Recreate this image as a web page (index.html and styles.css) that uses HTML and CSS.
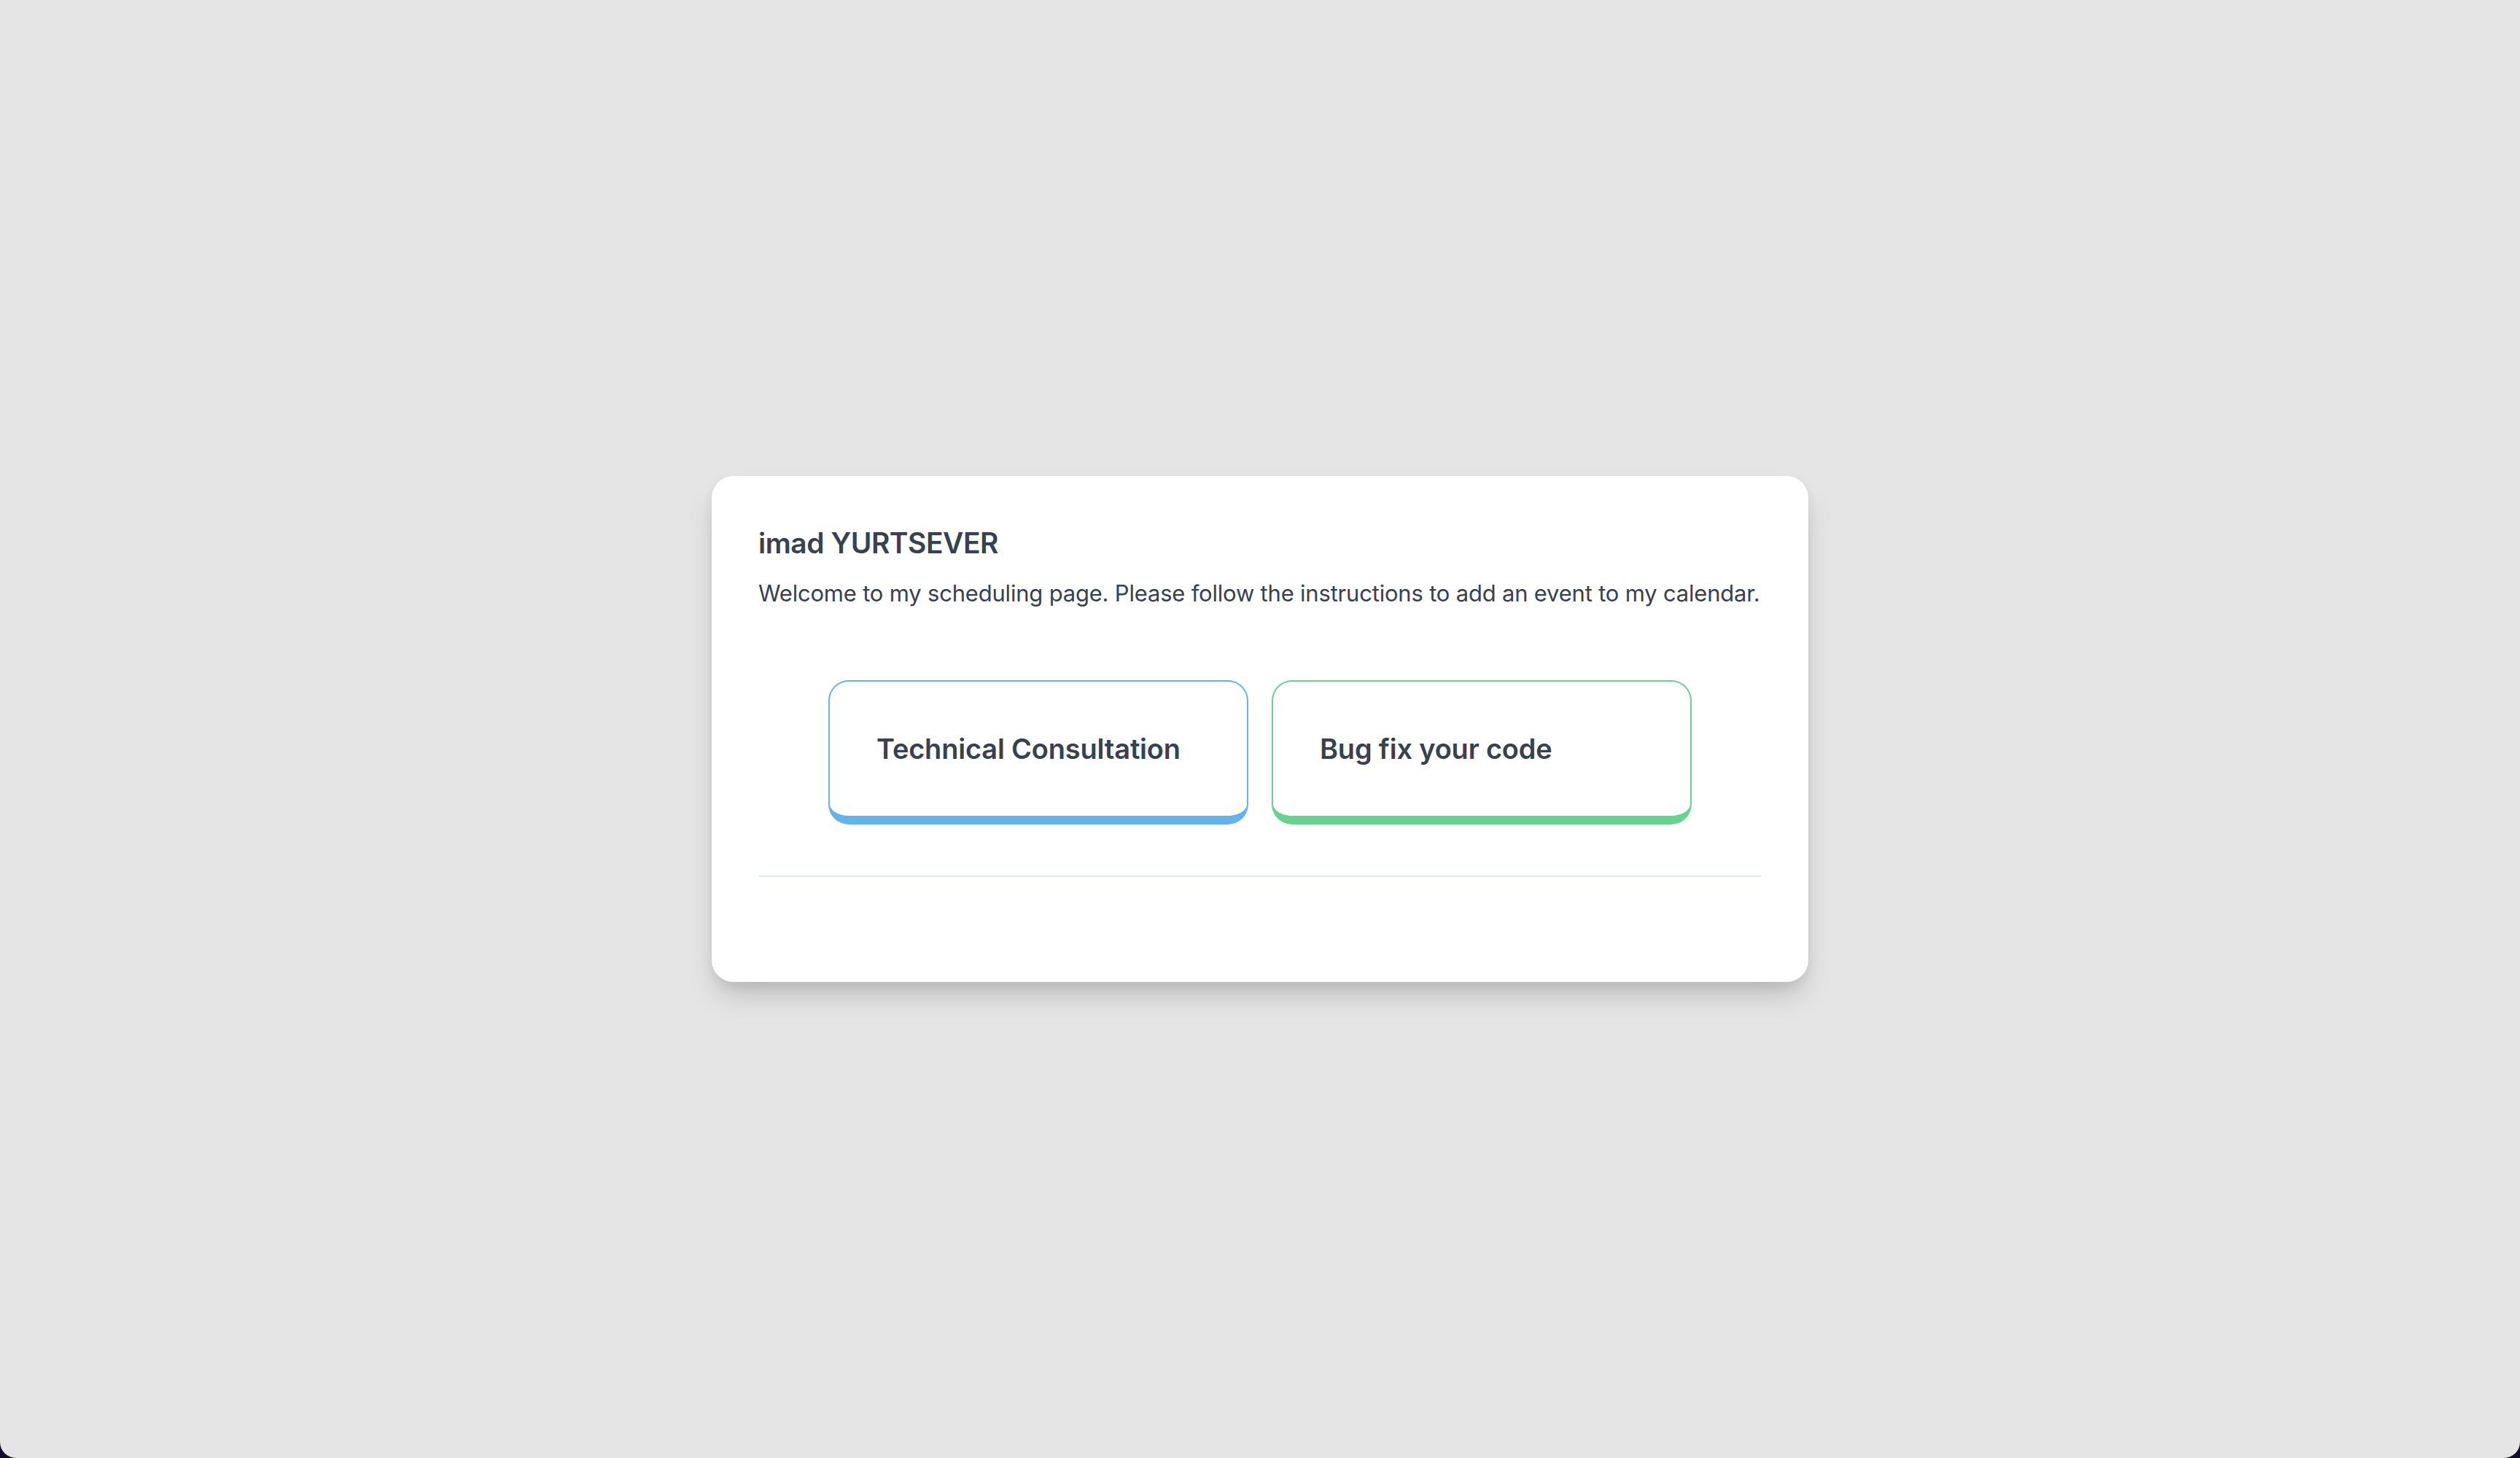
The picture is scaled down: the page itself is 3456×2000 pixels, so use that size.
FILE: index.html
```html
<!DOCTYPE html>
<html lang="en">
<head>
<meta charset="utf-8">
<title>imad YURTSEVER</title>
<link rel="stylesheet" href="styles.css">
</head>
<body>
<main class="page">
  <section class="card">
    <h1 class="title">imad YURTSEVER</h1>
    <p class="intro">Welcome to my scheduling page. Please follow the instructions to add an event to my calendar.</p>
    <div class="events">
      <a class="event event-blue" href="#">Technical Consultation</a>
      <a class="event event-green" href="#">Bug fix your code</a>
    </div>
    <hr class="divider">
    <div class="footer-space"></div>
  </section>
</main>
</body>
</html>
```
FILE: styles.css
```css
html {
  margin: 0;
  padding: 0;
  background: #140c2c;
  height: 100%;
}
body {
  margin: 0;
  height: 100%;
  background: #e5e5e5;
  border-radius: 0 0 22px 22px;
  font-family: Inter, "Noto Sans", "Liberation Sans", sans-serif;
  color: #374151;
}
.page {
  height: 100%;
  display: flex;
  align-items: center;
  justify-content: center;
}
.card {
  width: 1504px;
  box-sizing: border-box;
  background: #ffffff;
  border-radius: 30px;
  padding: 64px 64px 64px;
  box-shadow: 0 24px 40px -8px rgba(0, 0, 0, 0.18), 0 8px 16px rgba(0, 0, 0, 0.06);
}
.title {
  margin: 0;
  font-size: 39px;
  line-height: 56px;
  font-weight: 600;
  letter-spacing: -0.5px;
}
.intro {
  margin: 17px 0 0;
  font-size: 31px;
  line-height: 48px;
  font-weight: 400;
  letter-spacing: -0.2px;
  white-space: nowrap;
}
.events {
  display: flex;
  justify-content: center;
  gap: 32px;
  margin-top: 95px;
}
.event {
  width: 576px;
  box-sizing: border-box;
  border: 2px solid;
  border-bottom-width: 12px;
  border-radius: 28px;
  padding: 62px 64px;
  font-size: 38px;
  line-height: 60px;
  font-weight: 600;
  color: #374151;
  text-decoration: none;
  letter-spacing: -0.2px;
}
.event-blue { border-color: #63b3ed; }
.event-green { border-color: #68d391; }
.divider {
  margin: 70px 0 0;
  border: 0;
  height: 2px;
  background: #e2e8f0;
}
.footer-space {
  height: 80px;
}
```
